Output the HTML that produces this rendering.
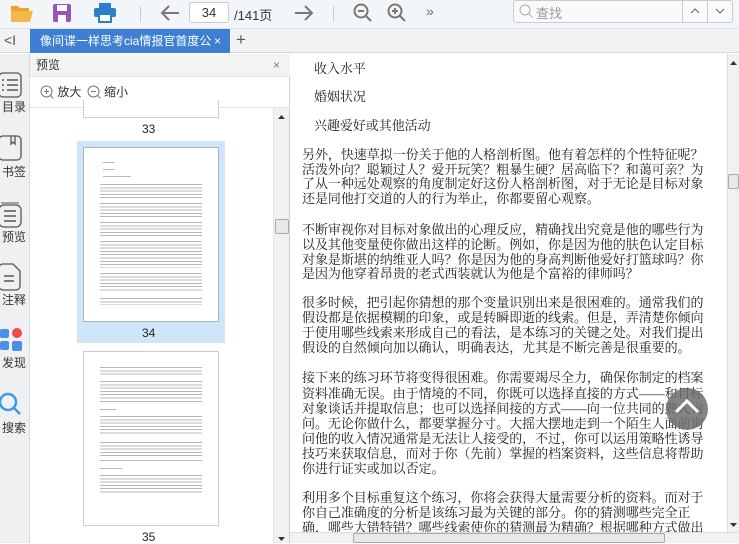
<!DOCTYPE html>
<html><head><meta charset="utf-8">
<style>
*{margin:0;padding:0;box-sizing:border-box}
body{width:739px;height:543px;overflow:hidden;position:relative;background:#fff;font-family:"Liberation Sans","Noto Sans CJK SC",sans-serif;font-size:12px;color:#333}
.a{position:absolute}
.tb{left:0;top:0;width:739px;height:29px;background:#f3f6f9;border-bottom:1px solid #dde3e8}
.tabbar{left:0;top:29px;width:739px;height:24px;background:#f1f2f4;border-bottom:1px solid #d5d8dc}
.tab{left:30px;top:29px;width:200px;height:24px;background:#3e7fd3;color:#fff;font-size:12px;line-height:24px;padding-left:10px;white-space:nowrap;overflow:hidden}
.rail{left:0;top:54px;width:30px;height:489px;background:#eef0f2;border-right:1px solid #d8dbde}
.rl{position:absolute;left:-3px;width:34px;text-align:center;font-size:12px;color:#333}
.pv{left:30px;top:54px;width:260px;height:489px;background:#fff;border-right:1px solid #d0d3d6}
.ph{left:30px;top:54px;width:260px;height:23px;background:#f3f3f3;border-bottom:1px solid #e0e0e0;font-size:12px;line-height:23px;padding-left:6px}
.zr{left:30px;top:77px;width:260px;height:31px;border-bottom:1px solid #e5e5e5;font-size:12px;line-height:31px;padding-left:10px;color:#333}
.pg{background:#fff;border:1px solid #c9ccd0}
.tx{position:absolute;background:repeating-linear-gradient(#b8b8b8 0 1px,transparent 1px 3.3px)}
.main{left:290px;top:54px;width:437px;height:478px;background:#fff;font-family:"Liberation Serif","Noto Serif CJK SC",serif;font-size:13px;color:#222;overflow:hidden}
.ln{position:absolute;left:12px;white-space:nowrap;line-height:15px;letter-spacing:-0.05px}
</style></head><body>
<div class="a tb"></div>
<svg class="a" style="left:10px;top:3px" width="24" height="20" viewBox="0 0 24 20"><path d="M1 3h7l2 2h9v3H1z" fill="#e9a52e"/><path d="M1 8h22l-3 11H1z" fill="#f2b84a"/></svg>
<svg class="a" style="left:53px;top:4px" width="18" height="18" viewBox="0 0 18 18"><rect x="0" y="0" width="18" height="18" rx="2" fill="#9b55b6"/><rect x="4" y="1" width="10" height="6" fill="#fff"/><rect x="5" y="11" width="8" height="7" fill="#fff"/></svg>
<svg class="a" style="left:94px;top:3px" width="22" height="20" viewBox="0 0 22 20"><rect x="5" y="0" width="12" height="5" fill="#2e7fc9"/><rect x="0" y="5" width="22" height="9" rx="2" fill="#2e7fc9"/><rect x="5" y="11" width="12" height="8" fill="#fff" stroke="#2e7fc9" stroke-width="2"/></svg>
<div class="a" style="left:140px;top:6px;width:1px;height:16px;background:#ccc"></div>
<svg class="a" style="left:160px;top:4px" width="20" height="18" viewBox="0 0 20 18"><path d="M19 9H2M9 2L2 9l7 7" stroke="#777" stroke-width="2" fill="none"/></svg>
<div class="a" style="left:189px;top:2px;width:40px;height:21px;border:1px solid #c8ccd0;border-radius:3px;background:#fff;text-align:center;line-height:19px;font-size:13px">34</div>
<div class="a" style="left:234px;top:5px;font-size:13px;color:#333">/141页</div>
<svg class="a" style="left:294px;top:4px" width="20" height="18" viewBox="0 0 20 18"><path d="M1 9h17M11 2l7 7-7 7" stroke="#777" stroke-width="2" fill="none"/></svg>
<div class="a" style="left:333px;top:6px;width:1px;height:16px;background:#ccc"></div>
<svg class="a" style="left:353px;top:3px" width="20" height="20" viewBox="0 0 20 20"><circle cx="8" cy="8" r="6.5" stroke="#777" stroke-width="2" fill="none"/><path d="M5 8h6M13 13l5 5" stroke="#777" stroke-width="2"/></svg>
<svg class="a" style="left:387px;top:3px" width="20" height="20" viewBox="0 0 20 20"><circle cx="8" cy="8" r="6.5" stroke="#777" stroke-width="2" fill="none"/><path d="M5 8h6M8 5v6M13 13l5 5" stroke="#777" stroke-width="2"/></svg>
<div class="a" style="left:426px;top:3px;font-size:14px;color:#666">»</div>
<div class="a" style="left:513px;top:0;width:220px;height:23px;border:1px solid #c8ccd0;border-radius:3px;background:#f9fafb"></div>
<div class="a" style="left:682px;top:0;width:1px;height:23px;background:#c8ccd0"></div>
<div class="a" style="left:707px;top:0;width:1px;height:23px;background:#c8ccd0"></div>
<svg class="a" style="left:519px;top:4px" width="14" height="14" viewBox="0 0 14 14"><circle cx="6" cy="6" r="5" stroke="#aaa" fill="none"/><path d="M9.5 9.5l4 4" stroke="#aaa"/></svg>
<div class="a" style="left:536px;top:3px;font-size:13px;color:#999">查找</div>
<svg class="a" style="left:690px;top:8px" width="10" height="6"><path d="M1 5l4-4 4 4" stroke="#666" fill="none"/></svg>
<svg class="a" style="left:715px;top:8px" width="10" height="6"><path d="M1 1l4 4 4-4" stroke="#666" fill="none"/></svg>

<div class="a tabbar"></div>
<div class="a" style="left:4px;top:32px;font-size:14px;color:#555">&lt;I</div>
<div class="a tab">像间谍一样思考cia情报官首度公<span style="position:absolute;left:184px">×</span></div>
<div class="a" style="left:236px;top:30px;font-size:17px;color:#555">+</div>

<div class="a rail"></div>
<svg class="a" style="left:-2px;top:72px" width="24" height="26"><rect x="1" y="1" width="22" height="24" rx="4" stroke="#555" stroke-width="1.3" fill="none"/><path d="M4 8h2M9 8h11M4 13h2M9 13h11M4 18h2M9 18h11" stroke="#555" stroke-width="1.5"/></svg>
<div class="rl" style="top:98px">目录</div>
<svg class="a" style="left:-2px;top:135px" width="24" height="26"><rect x="1" y="1" width="22" height="24" rx="4" stroke="#555" stroke-width="1.3" fill="none"/><path d="M13 1v8l2-2 2 2V1" stroke="#555" stroke-width="1.3" fill="none"/></svg>
<div class="rl" style="top:163px">书签</div>
<svg class="a" style="left:-2px;top:200px" width="26" height="28"><path d="M3 3h18" stroke="#555"/><rect x="1" y="5" width="22" height="22" rx="5" stroke="#555" stroke-width="1.3" fill="none"/><path d="M6 11h12M6 16h12M6 21h12" stroke="#555" stroke-width="1.5"/></svg>
<div class="rl" style="top:228px">预览</div>
<svg class="a" style="left:29px;top:203px" width="6" height="12"><path d="M6 0L0 6l6 6" fill="#fff" stroke="#d0d3d6"/></svg>
<svg class="a" style="left:-2px;top:263px" width="24" height="28"><path d="M1 5a4 4 0 014-4h10l7 7v15a4 4 0 01-4 4H5a4 4 0 01-4-4z" stroke="#555" stroke-width="1.3" fill="none"/><path d="M6 13h10M6 18h10" stroke="#555" stroke-width="1.5"/></svg>
<div class="rl" style="top:291px">注释</div>
<div class="a" style="left:0;top:329px;width:9px;height:9px;border-radius:2px;background:#4b8de8"></div>
<div class="a" style="left:12px;top:328px;width:10px;height:10px;border-radius:50%;background:#f04a4a"></div>
<div class="a" style="left:0;top:341px;width:9px;height:9px;border-radius:2px;background:#4b8de8"></div>
<div class="a" style="left:12px;top:341px;width:10px;height:10px;border-radius:2px;background:#4b8de8"></div>
<div class="rl" style="top:354px">发现</div>
<svg class="a" style="left:-2px;top:392px" width="26" height="26"><circle cx="10" cy="10" r="8" stroke="#3b9ae8" stroke-width="2.5" fill="none"/><path d="M16 16l6 6" stroke="#3b9ae8" stroke-width="2.5"/></svg>
<div class="rl" style="top:419px">搜索</div>

<div class="a pv"></div>
<div class="a ph">预览<span style="position:absolute;left:243px;color:#777">×</span></div>
<div class="a zr"><svg style="vertical-align:-3px" width="14" height="14"><circle cx="6.5" cy="6.5" r="5.5" stroke="#777" fill="none"/><path d="M4 6.5h5M6.5 4v5M10.5 10.5l3 3" stroke="#777"/></svg> 放大 <svg style="vertical-align:-3px;margin-left:2px" width="14" height="14"><circle cx="6.5" cy="6.5" r="5.5" stroke="#777" fill="none"/><path d="M4 6.5h5M10.5 10.5l3 3" stroke="#777"/></svg> 缩小</div>
<div class="a pg" style="left:83px;top:100px;width:136px;height:18px;border-top:none"></div>
<div class="a" style="left:142px;top:122px;font-size:12px;color:#222">33</div>
<div class="a" style="left:77px;top:141px;width:148px;height:202px;background:#cfe5fa"></div>
<div class="a pg" style="left:83px;top:147px;width:136px;height:175px;border-color:#aab4c0">
 <div class="tx" style="left:19px;top:14px;width:12px;height:2px"></div>
 <div class="tx" style="left:19px;top:21px;width:12px;height:2px"></div>
 <div class="tx" style="left:19px;top:28px;width:28px;height:2px"></div>
 <div class="tx" style="left:16px;top:36px;width:102px;height:14px"></div>
 <div class="tx" style="left:16px;top:55px;width:102px;height:14px"></div>
 <div class="tx" style="left:16px;top:74px;width:102px;height:14px"></div>
 <div class="tx" style="left:16px;top:93px;width:102px;height:27px"></div>
 <div class="tx" style="left:16px;top:125px;width:102px;height:20px"></div>
 <div class="tx" style="left:16px;top:150px;width:102px;height:7px"></div>
</div>
<div class="a" style="left:142px;top:326px;font-size:12px;color:#222">34</div>
<div class="a pg" style="left:83px;top:351px;width:136px;height:175px">
 <div class="tx" style="left:16px;top:15px;width:102px;height:10px"></div>
 <div class="tx" style="left:16px;top:29px;width:102px;height:23px"></div>
 <div class="tx" style="left:16px;top:57px;width:16px;height:2px"></div>
 <div class="tx" style="left:16px;top:64px;width:102px;height:20px"></div>
 <div class="tx" style="left:16px;top:90px;width:102px;height:14px"></div>
 <div class="tx" style="left:16px;top:108px;width:102px;height:3px"></div>
 <div class="tx" style="left:16px;top:116px;width:22px;height:2px"></div>
 <div class="tx" style="left:16px;top:123px;width:102px;height:20px"></div>
</div>
<div class="a" style="left:142px;top:530px;font-size:12px;color:#222">35</div>
<div class="a" style="left:273px;top:108px;width:16px;height:435px;background:#f1f1f1;border-left:1px solid #e3e3e3"></div>
<svg class="a" style="left:278px;top:114px" width="7" height="5"><path d="M0 5l3.5-4 3.5 4z" fill="#333"/></svg>
<div class="a" style="left:275px;top:219px;width:14px;height:15px;background:#e8e8e8;border:1px solid #aaa;border-radius:2px"></div>
<svg class="a" style="left:278px;top:537px" width="7" height="5"><path d="M0 0l3.5 4 3.5-4z" fill="#333"/></svg>

<div class="a main">
<div class="ln" style="left:24px;top:7px">收入水平</div>
<div class="ln" style="left:24px;top:35px">婚姻状况</div>
<div class="ln" style="left:24px;top:64px">兴趣爱好或其他活动</div>
<div class="ln" style="top:93px">另外，快速草拟一份关于他的人格剖析图。他有着怎样的个性特征呢？</div>
<div class="ln" style="top:108px">活泼外向？聪颖过人？爱开玩笑？粗暴生硬？居高临下？和蔼可亲？为</div>
<div class="ln" style="top:122px">了从一种远处观察的角度制定好这份人格剖析图，对于无论是目标对象</div>
<div class="ln" style="top:137px">还是同他打交道的人的行为举止，你都要留心观察。</div>
<div class="ln" style="top:168px">不断审视你对目标对象做出的心理反应，精确找出究竟是他的哪些行为</div>
<div class="ln" style="top:183px">以及其他变量使你做出这样的论断。例如，你是因为他的肤色认定目标</div>
<div class="ln" style="top:198px">对象是斯堪的纳维亚人吗？你是因为他的身高判断他爱好打篮球吗？你</div>
<div class="ln" style="top:212px">是因为他穿着昂贵的老式西装就认为他是个富裕的律师吗？</div>
<div class="ln" style="top:241px">很多时候，把引起你猜想的那个变量识别出来是很困难的。通常我们的</div>
<div class="ln" style="top:256px">假设都是依据模糊的印象，或是转瞬即逝的线索。但是，弄清楚你倾向</div>
<div class="ln" style="top:271px">于使用哪些线索来形成自己的看法，是本练习的关键之处。对我们提出</div>
<div class="ln" style="top:286px">假设的自然倾向加以确认，明确表达，尤其是不断完善是很重要的。</div>
<div class="ln" style="top:316px">接下来的练习环节将变得很困难。你需要竭尽全力，确保你制定的档案</div>
<div class="ln" style="top:332px">资料准确无误。由于情境的不同，你既可以选择直接的方式——和目标</div>
<div class="ln" style="top:347px">对象谈话并提取信息；也可以选择间接的方式——向一位共同的熟人询</div>
<div class="ln" style="top:362px">问。无论你做什么，都要掌握分寸。大摇大摆地走到一个陌生人面前询</div>
<div class="ln" style="top:377px">问他的收入情况通常是无法让人接受的，不过，你可以运用策略性诱导</div>
<div class="ln" style="top:392px">技巧来获取信息，而对于你（先前）掌握的档案资料，这些信息将帮助</div>
<div class="ln" style="top:407px">你进行证实或加以否定。</div>
<div class="ln" style="top:436px">利用多个目标重复这个练习，你将会获得大量需要分析的资料。而对于</div>
<div class="ln" style="top:451px">你自己准确度的分析是该练习最为关键的部分。你的猜测哪些完全正</div>
<div class="ln" style="top:466px">确，哪些大错特错？哪些线索使你的猜测最为精确？根据哪种方式做出</div>
</div>
<div class="a" style="left:666px;top:388px;width:42px;height:42px;border-radius:50%;background:rgba(110,110,110,.85)"></div>
<svg class="a" style="left:673px;top:396px" width="28" height="20"><path d="M3 16L14 5l11 11" stroke="#fff" stroke-width="3" fill="none"/></svg>
<div class="a" style="left:727px;top:54px;width:12px;height:478px;background:#f1f1f1;border-left:1px solid #ddd"></div>
<svg class="a" style="left:730px;top:60px" width="7" height="5"><path d="M0 5l3.5-4 3.5 4z" fill="#333"/></svg>
<div class="a" style="left:728px;top:174px;width:11px;height:15px;background:#e8e8e8;border:1px solid #aaa;border-radius:2px"></div>
<svg class="a" style="left:730px;top:523px" width="7" height="5"><path d="M0 0l3.5 4 3.5-4z" fill="#333"/></svg>
<div class="a" style="left:290px;top:532px;width:449px;height:11px;background:#f1f1f1;border-top:1px solid #ddd"></div>
<div class="a" style="left:353px;top:533px;width:312px;height:10px;background:#e8e8e8;border:1px solid #aaa;border-radius:2px"></div>
</body></html>
